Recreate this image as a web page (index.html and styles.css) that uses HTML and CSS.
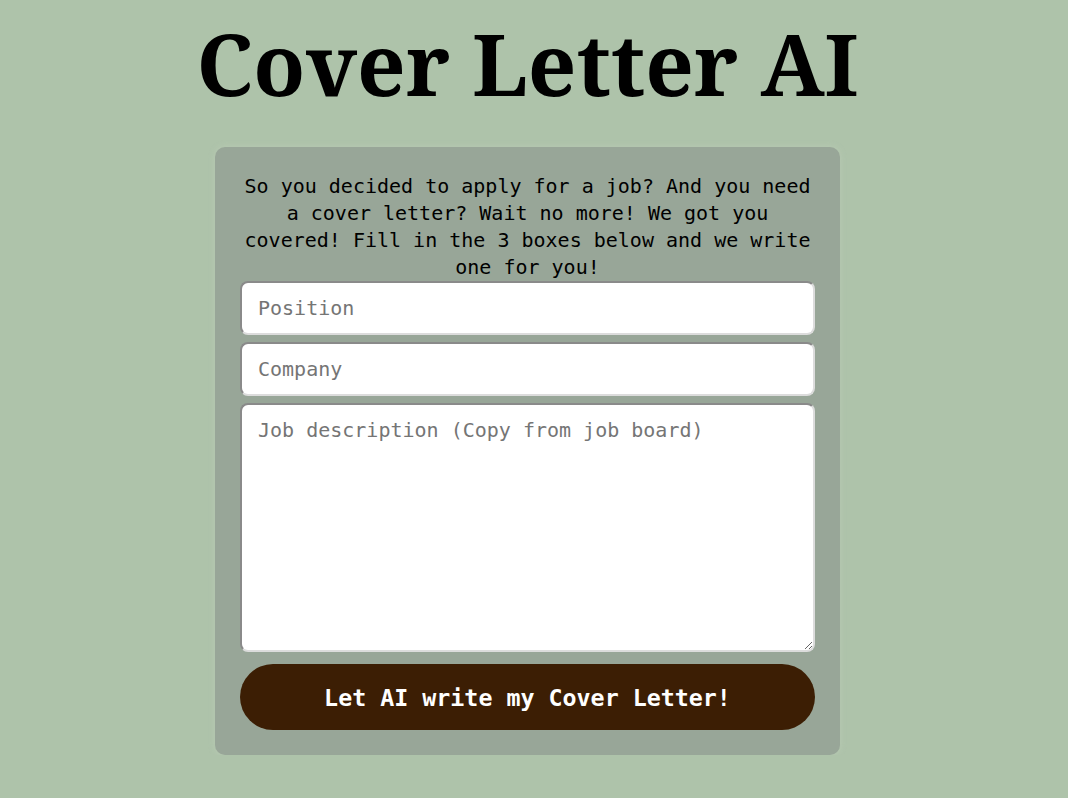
FILE: index.html
```html
<!DOCTYPE html>
<html lang="en">
<head>
<meta charset="utf-8">
<title>Cover Letter AI</title>
<link rel="stylesheet" href="styles.css">
</head>
<body>
<main class="page">
  <h1 class="title">Cover Letter AI</h1>
  <form class="card">
    <p class="intro">So you decided to apply for a job? And you need a cover letter? Wait no more! We got you covered! Fill in the 3 boxes below and we write one for you!</p>
    <input class="field" type="text" placeholder="Position">
    <input class="field" type="text" placeholder="Company">
    <textarea class="field area" placeholder="Job description (Copy from job board)"></textarea>
    <button class="submit" type="button">Let AI write my Cover Letter!</button>
  </form>
</main>
</body>
</html>
```
FILE: styles.css
```css
html, body {
  margin: 0;
  background: #aec3aa;
}
body {
  padding-right: 13px;
}
.page {
  display: flex;
  flex-direction: column;
  align-items: center;
}
.title {
  margin: 0;
  padding-top: 9px;
  font-family: "Noto Serif", "DejaVu Serif", serif;
  font-weight: bold;
  font-size: 85px;
  line-height: 109px;
  color: #000;
}
.card {
  box-sizing: border-box;
  width: 625px;
  margin-top: 29px;
  padding: 26px 25px 25px;
  background: #98a698;
  border-radius: 10px;
  box-shadow: 0 0 6px rgba(190, 205, 185, 0.7);
  display: flex;
  flex-direction: column;
  gap: 7px;
}
.intro {
  margin: 0 0 -7px;
  font-family: "DejaVu Sans Mono", monospace;
  font-size: 20px;
  line-height: 27px;
  text-align: center;
  color: #000;
}
.field {
  box-sizing: border-box;
  width: 100%;
  height: 54px;
  margin: 0;
  padding: 0 16px;
  font-family: "DejaVu Sans Mono", monospace;
  font-size: 20px;
  color: #000;
  background: #fff;
  border: 2px solid;
  border-color: #8a8a8a #dcdcdc #dcdcdc #8a8a8a;
  border-radius: 8px;
  outline: none;
}
.field::placeholder {
  color: #757575;
}
.area {
  height: 249px;
  padding: 14px 16px 13px;
  line-height: 23px;
  resize: vertical;
}
.submit {
  height: 66px;
  margin-top: 5px;
  border: none;
  border-radius: 33px;
  background: #3c1e04;
  color: #fff;
  font-family: "DejaVu Sans Mono", monospace;
  font-weight: bold;
  font-size: 23.3px;
  cursor: pointer;
}
```
